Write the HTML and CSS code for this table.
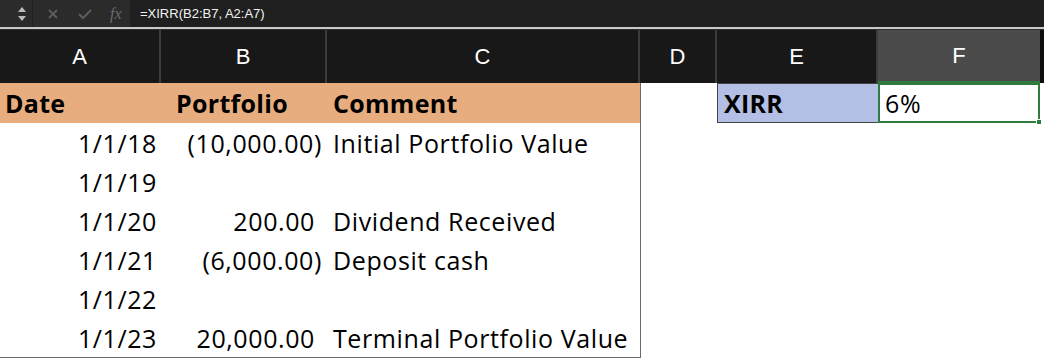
FILE: index.html
```html
<!DOCTYPE html>
<html>
<head>
<meta charset="utf-8">
<link rel="stylesheet" href="styles.css">
</head>
<body>
<div class="fbar">
  <div class="namebox">
    <svg width="12" height="18" viewBox="0 0 12 18"><path d="M6 2 L10 7 H2 Z" fill="#bdbdbd"/><path d="M6 16 L10 11 H2 Z" fill="#bdbdbd"/></svg>
  </div>
  <div class="ficons">
    <svg width="14" height="14" viewBox="0 0 14 14"><path d="M3 3 L11 11 M11 3 L3 11" stroke="#5c5c5c" stroke-width="2"/></svg>
    <svg width="16" height="14" viewBox="0 0 16 14"><path d="M2 7 L6 11 L14 3" stroke="#5c5c5c" stroke-width="2" fill="none"/></svg>
    <span class="fx">fx</span>
  </div>
  <div class="finput">=XIRR(B2:B7, A2:A7)</div>
</div>
<div class="sep"></div>
<div class="colheads">
  <div class="ch">A</div>
  <div class="ch">B</div>
  <div class="ch">C</div>
  <div class="ch">D</div>
  <div class="ch">E</div>
  <div class="ch sel">F</div>
  <div class="ch end"></div>
</div>
<div class="sheet">
  <div class="row1">
    <div class="hd a">Date</div>
    <div class="hd b">Portfolio</div>
    <div class="hd c">Comment</div>
    <div class="cell d"></div>
    <div class="cell e">XIRR</div>
    <div class="cell f">6%<span class="handle"></span></div>
  </div>
  <div class="table">
    <div class="r"><div class="a">1/1/18</div><div class="b">(10,000.00)</div><div class="c">Initial Portfolio Value</div></div>
    <div class="r"><div class="a">1/1/19</div><div class="b"></div><div class="c"></div></div>
    <div class="r"><div class="a">1/1/20</div><div class="b pos">200.00</div><div class="c">Dividend Received</div></div>
    <div class="r"><div class="a">1/1/21</div><div class="b">(6,000.00)</div><div class="c">Deposit cash</div></div>
    <div class="r"><div class="a">1/1/22</div><div class="b"></div><div class="c"></div></div>
    <div class="r"><div class="a">1/1/23</div><div class="b pos">20,000.00</div><div class="c">Terminal Portfolio Value</div></div>
  </div>
</div>
</body>
</html>
```
FILE: styles.css
```css
* { box-sizing: border-box; }
html, body { margin: 0; padding: 0; background: #ffffff; }
body { width: 1044px; height: 361px; overflow: hidden; font-family: "Open Sans", sans-serif; }

.fbar { height: 27px; background: #2b2b2b; display: flex; align-items: center; }
.namebox { width: 33px; height: 27px; display: flex; align-items: center; justify-content: flex-end; padding-right: 4px; border-right: 1px solid #222; }
.ficons { width: 97px; display: flex; align-items: center; gap: 17px; padding-left: 13px; }
.fx { font-family: "Liberation Serif", serif; font-style: italic; color: #6a6a6a; font-size: 16px; margin-left: 0; }
.finput { flex: 1; height: 27px; background: #1f1f1f; color: #f2f2f2; font-family: "Liberation Sans", sans-serif; font-size: 13px; display: flex; align-items: center; padding-left: 10px; }

.sep { height: 3px; background: #2f2f2f; border-top: 2px solid #c9c9c9; }

.colheads { display: grid; grid-template-columns: 161px 166px 313px 77px 161px 162px 4px; height: 53px; background: #181818; }
.ch { color: #fff; font-family: "Liberation Sans", sans-serif; font-size: 22px; display: flex; align-items: center; justify-content: center; border-right: 2px solid #3c3c3c; }
.ch.sel { background: #4b4b4b; border-right: none; border-bottom: 2px solid #2e7a3f; }
.ch.end { background: #0e0e0e; border-right: none; }

.sheet { font-family: "Open Sans", sans-serif; font-size: 25px; letter-spacing: 0.6px; color: #000; }
.row1 { display: grid; grid-template-columns: 161px 166px 313px 77px 161px 162px; height: 40px; }
.hd { background: #e8ad7f; font-weight: bold; display: flex; align-items: center; letter-spacing: 0.3px; }
.hd.a { padding-left: 5px; }
.hd.b { padding-left: 15px; }
.hd.c { padding-left: 6px; }
.cell { display: flex; align-items: center; }
.cell.d { border-left: 1px solid #6a6a6a; }
.cell.e { background: #b3bfe4; font-weight: bold; padding-left: 6px; border: 1px solid #444; border-right: none; letter-spacing: 0.3px; }
.cell.f { position: relative; padding-left: 5px; border: 2px solid #2e7a3f; }
.handle { position: absolute; right: -4px; bottom: -4px; width: 6px; height: 6px; background: #2e7a3f; border: 1px solid #fff; }

.table { width: 641px; border-right: 1px solid #6a6a6a; border-bottom: 1px solid #6a6a6a; }
.r { display: grid; grid-template-columns: 161px 166px 313px; height: 39px; align-items: center; }
.r .a { text-align: right; padding-right: 4px; }
.r .b { text-align: right; padding-right: 5px; }
.r .b.pos { padding-right: 12px; }
.r .c { padding-left: 6px; white-space: nowrap; }
```
